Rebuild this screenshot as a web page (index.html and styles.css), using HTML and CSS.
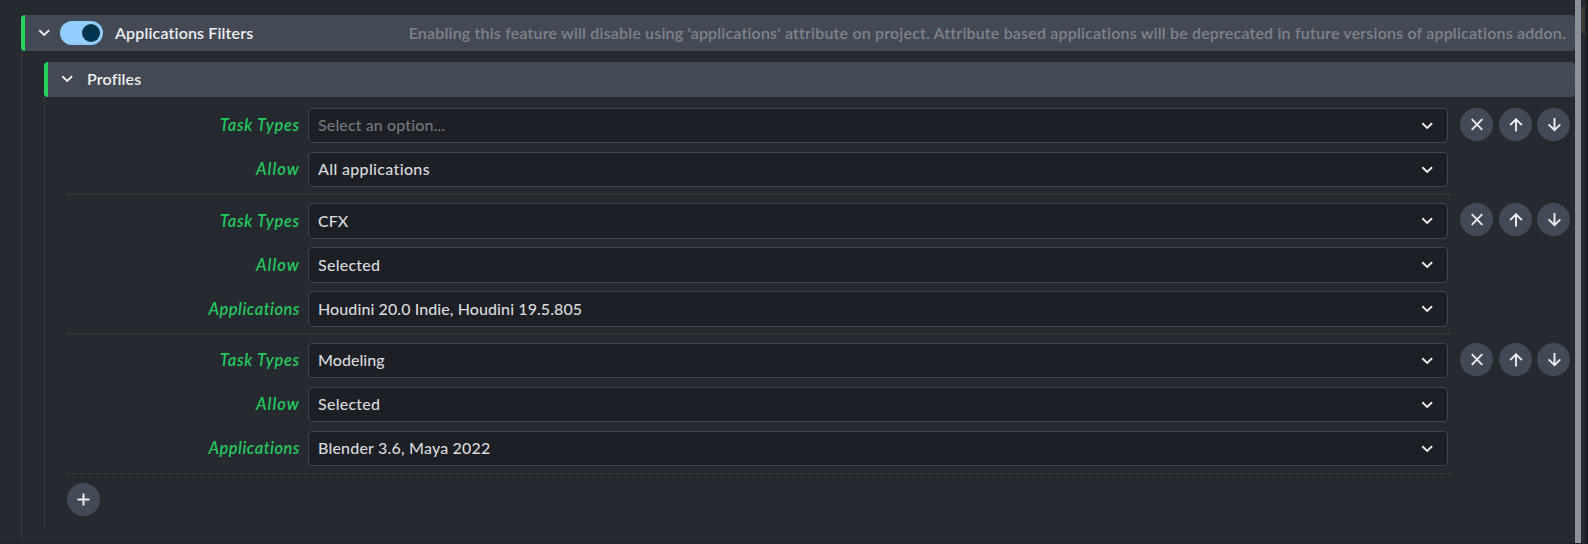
FILE: index.html
```html
<!DOCTYPE html>
<html lang="en">
<head>
<meta charset="utf-8">
<title>Applications Filters</title>
<link rel="stylesheet" href="styles.css">
</head>
<body>
<svg class="defs" width="0" height="0">
  <symbol id="chevron" viewBox="0 0 12 8"><path d="M1.300 1.200 6.200 5.900l4.900-4.700"/></symbol>
  <symbol id="close" viewBox="0 0 14 14"><path d="M1.700 1.200l10.600 10.600M12.300 1.200 1.700 11.800"/></symbol>
  <symbol id="up" viewBox="0 0 14 14"><path d="M7 13.500V1.500M1.100 7.200 7 1.300l5.900 5.900"/></symbol>
  <symbol id="down" viewBox="0 0 14 14"><path d="M7.500 0v12M1.600 6.300 7.500 12.200l5.900-5.900"/></symbol>
  <symbol id="plus" viewBox="0 0 14 14"><path d="M6.500 .5v12M.5 6.500h12"/></symbol>
</svg>
<div class="page">
  <main class="panel">
    <header class="bar bar-main">
      <svg class="chevron"><use href="#chevron"/></svg>
      <span class="toggle"><span class="knob"></span></span>
      <h1 class="title">Applications Filters</h1>
      <p class="note">Enabling this feature will disable using 'applications' attribute on project. Attribute based applications will be deprecated in future versions of applications addon.</p>
    </header>
    <div class="body-main">
      <header class="bar bar-sub">
        <svg class="chevron"><use href="#chevron"/></svg>
        <h2 class="title title-sub">Profiles</h2>
      </header>
      <div class="body-sub">
        <section class="profile first">
          <div class="fields">
            <div class="row"><span class="label">Task Types</span><div class="select"><span class="value placeholder">Select an option...</span><svg class="chevron"><use href="#chevron"/></svg></div></div>
            <div class="row"><span class="label allow">Allow</span><div class="select"><span class="value wide">All applications</span><svg class="chevron"><use href="#chevron"/></svg></div></div>
          </div>
          <div class="actions"><button class="round"><svg><use href="#close"/></svg></button><button class="round"><svg><use href="#up"/></svg></button><button class="round"><svg><use href="#down"/></svg></button></div>
        </section>
        <section class="profile second">
          <div class="fields">
            <div class="row"><span class="label">Task Types</span><div class="select"><span class="value tight">CFX</span><svg class="chevron"><use href="#chevron"/></svg></div></div>
            <div class="row"><span class="label allow">Allow</span><div class="select"><span class="value">Selected</span><svg class="chevron"><use href="#chevron"/></svg></div></div>
            <div class="row"><span class="label apps">Applications</span><div class="select"><span class="value numeric">Houdini 20.0 Indie, Houdini 19.5.805</span><svg class="chevron"><use href="#chevron"/></svg></div></div>
          </div>
          <div class="actions"><button class="round"><svg><use href="#close"/></svg></button><button class="round"><svg><use href="#up"/></svg></button><button class="round"><svg><use href="#down"/></svg></button></div>
        </section>
        <section class="profile third">
          <div class="fields">
            <div class="row"><span class="label">Task Types</span><div class="select"><span class="value tight">Modeling</span><svg class="chevron"><use href="#chevron"/></svg></div></div>
            <div class="row"><span class="label allow">Allow</span><div class="select"><span class="value">Selected</span><svg class="chevron"><use href="#chevron"/></svg></div></div>
            <div class="row"><span class="label apps">Applications</span><div class="select"><span class="value version">Blender 3.6, Maya 2022</span><svg class="chevron"><use href="#chevron"/></svg></div></div>
          </div>
          <div class="actions"><button class="round"><svg><use href="#close"/></svg></button><button class="round"><svg><use href="#up"/></svg></button><button class="round"><svg><use href="#down"/></svg></button></div>
        </section>
        <button class="round add"><svg><use href="#plus"/></svg></button>
      </div>
    </div>
  </main>
  <div class="scrollbar"></div>
  <div class="gutter"><div class="marker"></div></div>
  <div class="edge"></div>
</div>
</body>
</html>
```
FILE: styles.css
```css
* { box-sizing: border-box; }
body {
  margin: 0;
  background: #252930;
  font: 500 16px/20px Lato, "Noto Sans", sans-serif;
  color: #d8dadd;
  overflow: hidden;
}
.defs { display: block; height: 0; }
.page { display: flex; height: 544px; border-bottom: 1px solid #1f2228; }
.panel { flex: 1; padding: 15px 0 0 21px; }
.scrollbar { width: 6px; background: #8b9199; }
.gutter { width: 4px; padding-top: 7px; }
.marker { height: 26px; background: #3a3a39; }
.edge { width: 3px; background: #1c1f25; }

.bar {
  display: flex;
  align-items: center;
  background: #434a56;
  border-left: 4px solid #27d35d;
  border-radius: 4px;
  padding-left: 13px;
}
.bar-main { height: 36px; padding-right: 9px; }
.bar-sub { height: 35px; padding-bottom: 1px; }
.title { margin: 0 0 0 12px; font-size: 16px; font-weight: 600; letter-spacing: .15px; color: #eceef0; white-space: nowrap; }
.title-sub { margin-left: 14px; letter-spacing: .15px; }
.note { margin: 0 0 0 auto; color: #7d828b; font-weight: 600; letter-spacing: .175px; white-space: nowrap; }

svg { fill: none; stroke: #eceef0; stroke-width: 1.9; display: block; }
.chevron { width: 12px; height: 8px; flex: none; }
.toggle { display: flex; justify-content: flex-end; align-items: center; width: 43px; height: 24px; margin-left: 10px; padding-right: 3px; border-radius: 12px; background: #91cdff; }
.knob { width: 18px; height: 18px; border-radius: 50%; background: #00344f; }

.body-main { height: 487px; padding: 11px 0 0 22px; border-left: 1px dotted #4b4e53; }
.body-sub { height: 430px; padding: 11px 5px 0 22px; border-left: 1px dotted #4b4e53; }
.profile { display: flex; justify-content: space-between; }
.fields { width: 1384px; display: flex; flex-direction: column; border-bottom: 1px dotted #494a4b; }
.first { height: 87px; margin-bottom: 8px; }
.second { height: 131px; margin-bottom: 9px; }
.third { height: 131px; margin-bottom: 9px; }
.row { display: flex; align-items: center; width: 1381px; height: 35px; margin-bottom: 9px; flex: none; }
.second .row { height: 36px; margin-bottom: 8px; }
.label { width: 233px; padding-bottom: 1px; text-align: right; font-size: 16.5px; font-style: italic; font-weight: 600; color: #25c75c; letter-spacing: .72px; }
.label.allow { letter-spacing: 1.05px; }
.label.apps { letter-spacing: .48px; }
.select { flex: 1; display: flex; align-items: center; height: 100%; margin-left: 8px; padding: 0 14px 0 9px; border: 1px solid #41454c; border-radius: 4px; background: #1c1f26; }
.value { flex: 1; padding-bottom: 1px; letter-spacing: .25px; }
.value.placeholder { color: #74777c; letter-spacing: .12px; }
.value.wide { letter-spacing: .34px; }
.value.numeric { letter-spacing: .09px; }
.value.tight { letter-spacing: .05px; }
.value.version { letter-spacing: .19px; }
.actions { display: grid; grid-template-columns: 39px 38px 33px; height: 33px; }
.round { display: grid; place-items: center; width: 33px; height: 33px; padding: 0; border: 0; border-radius: 50%; background: #434a57; }
.round svg { width: 14px; height: 14px; }
.add svg { stroke-width: 2; }
```
